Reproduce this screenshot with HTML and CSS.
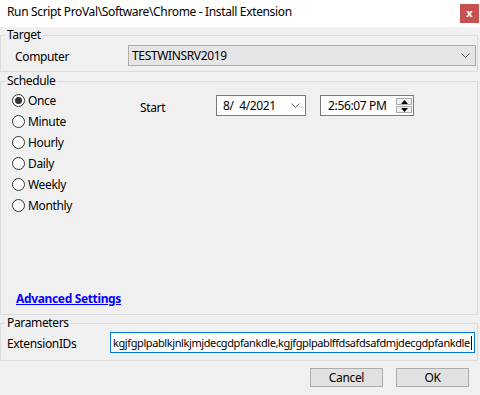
FILE: index.html
```html
<!DOCTYPE html>
<html lang="en">
<head>
  <meta charset="UTF-8" />
  <title>Run Script - Install Extension</title>
  <link rel="stylesheet" href="styles.css">
</head>
<body>
  <div class="window">
    <!-- Title bar -->
    <div class="titlebar">
      <span class="title">Run Script ProVal\Software\Chrome - Install Extension</span>
      <span class="close">x</span>
    </div>

    <!-- Target -->
    <fieldset class="group group-target">
      <legend>Target</legend>
      <div class="row">
        <span class="label label-computer">Computer</span>
        <div class="combo">
          <span>TESTWINSRV2019</span>
          <svg class="chevron" width="9" height="5" viewBox="0 0 9 5"><path d="M0.5 0.5 L4.5 4.5 L8.5 0.5" fill="none" stroke="#606060" stroke-width="1"/></svg>
        </div>
      </div>
    </fieldset>

    <!-- Schedule -->
    <fieldset class="group group-schedule">
      <legend>Schedule</legend>
      <div class="schedule">
        <div class="radios">
          <div class="radio checked"><span class="dot"></span>Once</div>
          <div class="radio"><span class="dot"></span>Minute</div>
          <div class="radio"><span class="dot"></span>Hourly</div>
          <div class="radio"><span class="dot"></span>Daily</div>
          <div class="radio"><span class="dot"></span>Weekly</div>
          <div class="radio"><span class="dot"></span>Monthly</div>
        </div>
        <div class="start">
          <span class="label label-start">Start</span>
          <div class="picker date">
            <span>8/&nbsp; 4/2021</span>
            <svg class="chevron" width="9" height="5" viewBox="0 0 9 5"><path d="M0.5 0.5 L4.5 4.5 L8.5 0.5" fill="none" stroke="#606060" stroke-width="1"/></svg>
          </div>
          <div class="picker time">
            <span>2:56:07 PM</span>
            <div class="spin">
              <div class="spin-btn"><svg width="7" height="4" viewBox="0 0 7 4"><path d="M3.5 0 L7 4 L0 4 Z" fill="#000"/></svg></div>
              <div class="spin-btn"><svg width="7" height="4" viewBox="0 0 7 4"><path d="M0 0 L7 0 L3.5 4 Z" fill="#000"/></svg></div>
            </div>
          </div>
        </div>
      </div>
      <a class="advanced" href="#">Advanced Settings</a>
    </fieldset>

    <!-- Parameters -->
    <fieldset class="group group-params">
      <legend>Parameters</legend>
      <div class="row">
        <span class="label label-param">ExtensionIDs</span>
        <div class="textbox">kgjfgplpablkjnlkjmjdecgdpfankdle,kgjfgplpablffdsafdsafdmjdecgdpfankdle<span class="caret"></span></div>
      </div>
    </fieldset>

    <div class="buttons">
      <button>Cancel</button>
      <button>OK</button>
    </div>
  </div>
</body>
</html>
```

FILE: styles.css
```css
* {
  box-sizing: border-box;
}
body {
  margin: 0;
  background: #f0f0f0;
  color: #000;
  font-family: 'Noto Sans', sans-serif;
  font-size: 12px;
  line-height: 16px;
  letter-spacing: -0.35px;
}
.window {
  width: 480px;
  height: 395px;
  overflow: hidden;
}
.titlebar {
  height: 27px;
  background: #fff;
  display: flex;
  align-items: flex-start;
  justify-content: space-between;
  padding: 4px 1px 0 7px;
}
.title {
  line-height: 16px;
}
.close {
  width: 19px;
  height: 19px;
  background: #c75050;
  color: #fff;
  font-weight: bold;
  font-size: 11px;
  line-height: 17px;
  text-align: center;
  letter-spacing: 0;
}
.group {
  margin: 0 2px 0 0;
  padding: 0;
  border: 1px solid #dcdcdc;
  min-width: 0;
}
.group legend {
  margin-left: 4px;
  padding: 0 2px;
  line-height: 16px;
}
.row {
  display: flex;
  align-items: center;
}
.group-target .row {
  padding: 2px 1px 5px 14px;
}
.label-computer {
  width: 113px;
  padding-top: 3px;
}
.combo {
  flex: 1;
  height: 21px;
  background: #e5e5e5;
  border: 1px solid #adadad;
  display: flex;
  align-items: center;
  justify-content: space-between;
  padding: 0 5px 0 3px;
}
.group-schedule {
  margin-top: 1px;
  height: 242px;
  display: flex;
  flex-direction: column;
}
.schedule {
  display: flex;
  padding: 1px 0 0 11px;
}
.radios {
  width: 128px;
}
.radio {
  height: 21px;
  display: flex;
  align-items: center;
  gap: 3px;
}
.dot {
  width: 13px;
  height: 13px;
  border: 1px solid #333;
  border-radius: 50%;
  background: #fff;
  display: flex;
  align-items: center;
  justify-content: center;
}
.radio.checked .dot::after {
  content: "";
  width: 7px;
  height: 7px;
  border-radius: 50%;
  background: #333;
}
.start {
  display: flex;
  align-items: flex-start;
  padding-top: 5px;
}
.label-start {
  width: 76px;
  margin-top: 5px;
}
.picker {
  height: 21px;
  background: #fff;
  border: 1px solid #7a7a7a;
  display: flex;
  align-items: center;
  justify-content: space-between;
}
.date {
  width: 90px;
  padding: 0 5px 0 6px;
}
.time {
  width: 94px;
  margin-left: 14px;
  padding: 0 1px 0 7px;
}
.spin {
  width: 16px;
  display: flex;
  flex-direction: column;
  gap: 1px;
}
.spin-btn {
  height: 7px;
  border: 1px solid #acacac;
  background: #f0f0f0;
  display: flex;
  align-items: center;
  justify-content: center;
}
.spin-btn svg {
  display: block;
}
.advanced {
  margin-top: auto;
  margin-bottom: 7px;
  margin-left: 15px;
  align-self: flex-start;
  color: #0000ff;
  font-weight: bold;
  text-decoration: underline;
}
.group-params .row {
  padding: 1px 2px 7px 6px;
}
.label-param {
  width: 103px;
  padding-top: 3px;
}
.textbox {
  flex: 1;
  height: 21px;
  background: #fff;
  border: 1px solid #0078d7;
  padding: 0 2px;
  display: flex;
  align-items: center;
  white-space: nowrap;
  overflow: hidden;
  font-size: 11px;
  letter-spacing: -0.4px;
}
.caret {
  width: 1px;
  height: 14px;
  margin-left: 1px;
  background: #000;
}
.buttons {
  display: flex;
  justify-content: flex-end;
  gap: 13px;
  padding: 7px 11px 0 0;
}
button {
  width: 73px;
  height: 19px;
  background: #e1e1e1;
  border: 1px solid #adadad;
  font-family: inherit;
  font-size: 12px;
  letter-spacing: inherit;
  color: #000;
  padding: 0;
}
```
